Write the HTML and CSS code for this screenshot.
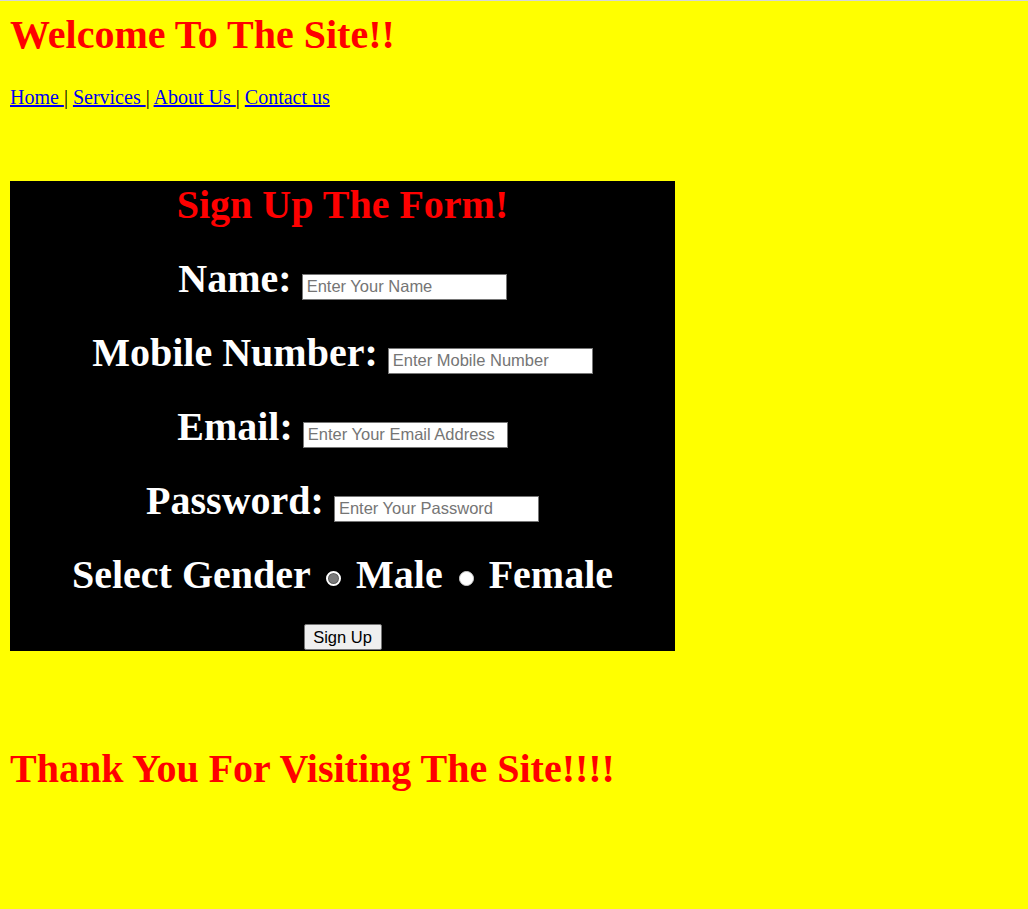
FILE: index.html
```html
<!DOCTYPE html>
<html lang="en">
<head>
<meta charset="utf-8">
<title>Welcome To The Site!!</title>
<link rel="stylesheet" href="styles.css">
</head>
<body>
<h1 class="title">Welcome To The Site!!</h1>
<p class="nav"><a href="#">Home </a>| <a href="#">Services </a>| <a href="#">About Us </a>| <a href="#">Contact us</a></p>

<form class="signup">
  <h1 class="form-title">Sign Up The Form!</h1>
  <div class="row"><label>Name:</label> <input type="text" placeholder="Enter Your Name"></div>
  <div class="row"><label>Mobile Number:</label> <input type="text" placeholder="Enter Mobile Number"></div>
  <div class="row"><label>Email:</label> <input type="text" placeholder="Enter Your Email Address"></div>
  <div class="row"><label>Password:</label> <input type="password" placeholder="Enter Your Password"></div>
  <div class="row">Select Gender <input type="radio" name="g" class="radio radio-checked"> Male <input type="radio" name="g" class="radio"> Female</div>
  <div class="actions"><button type="button" class="btn">Sign Up</button></div>
</form>

<h1 class="thanks">Thank You For Visiting The Site!!!!</h1>
</body>
</html>
```

FILE: styles.css
```css
html {
  border-top: 1px solid #d6d6d6;
}
body {
  margin: 10px 10px 0;
  background: #ffff00;
  font-family: "Liberation Serif", "Times New Roman", serif;
  color: #000;
}
.title {
  margin: 0;
  font-size: 40px;
  font-weight: bold;
  color: #ff0000;
}
.nav {
  margin: 28px 0 0;
  font-size: 20px;
}
.nav a {
  color: #0000ee;
  text-decoration: underline;
}
.signup {
  margin-top: 72px;
  width: 665px;
  background: #000;
  text-align: center;
  color: #fff;
}
.form-title {
  margin: 0;
  font-size: 40px;
  color: #ff0000;
}
.row {
  margin-top: 28px;
  height: 46px;
  line-height: 46px;
  font-size: 40px;
  font-weight: bold;
  white-space: nowrap;
}
.row input[type="text"],
.row input[type="password"] {
  box-sizing: border-box;
  width: 205px;
  height: 26px;
  margin: 0;
  padding: 1px 4px;
  border: 1px solid #767676;
  border-radius: 0;
  background: #fff;
  font-family: "Liberation Sans", Arial, sans-serif;
  font-size: 16.5px;
  font-weight: normal;
  color: #000;
  vertical-align: baseline;
}
.row input::placeholder {
  color: #757575;
}
.radio {
  -webkit-appearance: none;
  appearance: none;
  box-sizing: border-box;
  display: inline-block;
  width: 15px;
  height: 15px;
  margin: 0 5px 0 6px;
  border-radius: 50%;
  border: 1px solid #d0d0d0;
  background: #fff;
  vertical-align: 2px;
}
.radio-checked {
  border: 2px solid #fff;
  background: #7a7a7a;
  box-shadow: inset 0 0 0 1px #5a5a5a;
}
.actions {
  margin-top: 26px;
  padding-bottom: 1px;
  display: flex;
  justify-content: center;
}
.btn {
  box-sizing: border-box;
  height: 26px;
  width: 78px;
  padding: 0 6px;
  border: 1px solid #767676;
  border-radius: 2px;
  background: #efefef;
  font-family: "Liberation Sans", Arial, sans-serif;
  font-size: 16.5px;
  color: #000;
}
.thanks {
  margin: 94px 0 0;
  font-size: 40px;
  color: #ff0000;
}
```
